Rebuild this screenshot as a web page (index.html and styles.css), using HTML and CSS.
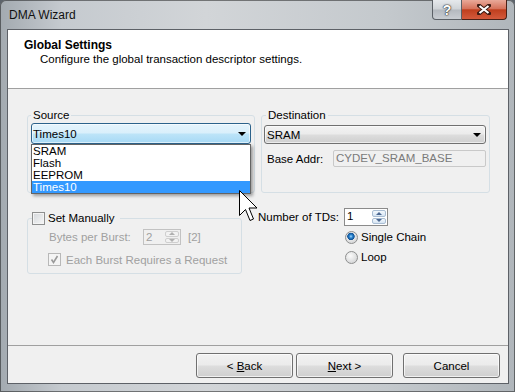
FILE: index.html
```html
<!DOCTYPE html>
<html lang="en">
<head>
    <meta charset="UTF-8">
    <title>DMA Wizard</title>
    <link rel="stylesheet" href="styles.css">
</head>
<body>
<div class="window">
    <div class="titlebar">
        <span class="title">DMA Wizard</span>
        <div class="caption-buttons">
            <span class="cap-btn help">?</span>
            <span class="cap-btn close">
                <svg width="14" height="11" viewBox="0 0 14 11">
                    <path d="M2 1.5 L12 9.5 M12 1.5 L2 9.5" stroke="#3b1a12" stroke-width="4" stroke-linecap="square"/>
                    <path d="M2.5 2 L11.5 9 M11.5 2 L2.5 9" stroke="#fff" stroke-width="2.2"/>
                </svg>
            </span>
        </div>
    </div>

    <div class="frame">
        <div class="client">
            <div class="header">
                <div class="header-title">Global Settings</div>
                <div class="header-sub">Configure the global transaction descriptor settings.</div>
            </div>

            <div class="content">
                <div class="row-top">
                    <fieldset class="group source">
                        <legend>Source</legend>
                        <div class="combo-wrap">
                            <div class="combo open"><span>Times10</span><span class="arrow"></span></div>
                            <ul class="dropdown">
                                <li>SRAM</li>
                                <li>Flash</li>
                                <li>EEPROM</li>
                                <li class="selected">Times10</li>
                            </ul>
                        </div>
                    </fieldset>

                    <fieldset class="group dest">
                        <legend>Destination</legend>
                        <div class="combo"><span>SRAM</span><span class="arrow"></span></div>
                        <div class="field-row">
                            <span class="base-label">Base Addr:</span>
                            <span class="textbox">CYDEV_SRAM_BASE</span>
                        </div>
                    </fieldset>
                </div>

                <div class="row-bottom">
                    <fieldset class="group manual">
                        <legend><span class="check"></span>Set Manually</legend>
                        <div class="burst-row">
                            <span class="burst-label">Bytes per Burst:</span>
                            <span class="spin off">
                                <span class="spin-text">2</span>
                                <span class="spin-btns"><span class="up"></span><span class="down"></span></span>
                            </span>
                            <span class="burst-note">[2]</span>
                        </div>
                        <div class="check-row">
                            <span class="check off">
                                <svg width="11" height="11" viewBox="0 0 11 11">
                                    <path d="M2.5 5.5 L4.5 8.5 L8.5 2" fill="none" stroke="#9a9a9a" stroke-width="1.6"/>
                                </svg>
                            </span>
                            <span class="check-text">Each Burst Requires a Request</span>
                        </div>
                    </fieldset>

                    <div class="tds">
                        <div class="tds-row">
                            <span class="tds-label">Number of TDs:</span>
                            <span class="spin">
                                <span class="spin-text">1</span>
                                <span class="spin-btns"><span class="up"></span><span class="down"></span></span>
                            </span>
                        </div>
                        <div class="radio-row first"><span class="radio on"></span>Single Chain</div>
                        <div class="radio-row"><span class="radio"></span>Loop</div>
                    </div>
                </div>

                <!-- mouse pointer over the open list -->
                <svg class="cursor" width="20" height="33" viewBox="0 0 20 33">
                    <polygon points="0.5,0.5 0.5,25.5 6.5,19.5 11,30.5 14.5,29 10,18 18,18" fill="#fff" stroke="#000" stroke-width="1"/>
                </svg>
            </div>

            <div class="footer">
                <button class="btn">&lt; <u>B</u>ack</button>
                <button class="btn next"><u>N</u>ext &gt;</button>
                <button class="btn cancel">Cancel</button>
            </div>
        </div>
    </div>
</div>
</body>
</html>
```

FILE: styles.css
```css
* {
    box-sizing: border-box;
}
body {
    margin: 0;
    background-color: #5c636b;
}
.window {
    width: 515px;
    height: 392px;
    display: flex;
    flex-direction: column;
    border-radius: 6px 6px 0 0;
    overflow: hidden;
    background: linear-gradient(90deg, #a3aab0 0%, #c5cacf 12%, #d2d5d8 40%, #c4c9cd 75%, #b0b6bb 100%);
    box-shadow: inset 0 0 0 1px rgba(0, 0, 0, 0.45);
    font-family: "Liberation Sans", Arial, sans-serif;
    font-size: 11.5px;
    color: #000;
}

/* title bar */
.titlebar {
    height: 29px;
    display: flex;
    justify-content: space-between;
    align-items: flex-start;
    padding: 0 8px 0 9px;
}
.title {
    font-size: 12px;
    line-height: 14px;
    margin-top: 8px;
    color: #111;
}
.caption-buttons {
    display: flex;
}
.cap-btn {
    height: 20px;
    display: flex;
    align-items: center;
    justify-content: center;
}
.help {
    width: 30px;
    border: 1px solid #5b6066;
    border-top: none;
    border-radius: 0 0 0 4px;
    background: linear-gradient(#e6e9ec, #cfd3d7 48%, #b4b9bf 52%, #c9cdd2);
    color: #fff;
    font-weight: bold;
    font-size: 14px;
    text-shadow: 0 0 1px #333, 0 0 1px #333, 0 0 2px #333;
}
.close {
    width: 45px;
    border: 1px solid #4a2016;
    border-top: none;
    border-left: none;
    border-radius: 0 0 4px 0;
    background: linear-gradient(#e9a999, #d6735c 45%, #bf3f1e 52%, #d45a3c);
}

/* client area */
.frame {
    flex: 1;
    display: flex;
    padding: 0 6px 8px 7px;
}
.client {
    flex: 1;
    display: flex;
    flex-direction: column;
    border: 1px solid #5d6167;
    background-color: #f0f0f0;
}
.header {
    height: 59px;
    background-color: #fff;
    border-bottom: 1px solid #a0a0a0;
    padding: 8px 0 0 16px;
}
.header-title {
    font-weight: bold;
    font-size: 12px;
    line-height: 14px;
}
.header-sub {
    line-height: 14px;
    padding-left: 16px;
}
.content {
    flex: 1;
    position: relative;
    padding: 19px 0 0 19px;
}

/* group boxes */
.row-top {
    display: flex;
    gap: 6px;
}
.group {
    margin: 0;
    padding: 0 0 0 3px;
    min-width: 0;
    height: 85px;
    border: 1px solid #d5dfe5;
    border-radius: 3px;
}
.group legend {
    padding: 0 2px;
    line-height: 14px;
}
.source {
    width: 228px;
}
.dest {
    width: 229px;
    padding-left: 2px;
}
.dest legend {
    margin-left: 2px;
}

/* combo boxes */
.combo-wrap {
    position: relative;
    margin-top: 1px;
    width: 220px;
}
.combo {
    height: 19px;
    margin-top: 3px;
    width: 222px;
    display: flex;
    align-items: center;
    justify-content: space-between;
    padding: 0 4px 0 2px;
    border: 1px solid #707070;
    border-radius: 3px;
    background: linear-gradient(#f3f3f3, #ebebeb 48%, #dddddd 52%, #cfcfcf);
    box-shadow: inset 0 0 0 1px rgba(255, 255, 255, 0.6);
}
.combo.open {
    height: 21px;
    margin-top: 0;
    width: 220px;
    padding-left: 1px;
    border-color: #2c628b;
    background: linear-gradient(#e5f4fc, #d9effb 48%, #bde4f8 52%, #a7d9f5);
}
.arrow {
    width: 0;
    height: 0;
    border-left: 4px solid transparent;
    border-right: 4px solid transparent;
    border-top: 4px solid #000;
}
.dropdown {
    position: absolute;
    top: 100%;
    left: 0;
    width: 220px;
    margin: 0;
    padding: 0;
    list-style: none;
    background-color: #fff;
    border: 1px solid #646464;
    box-shadow: 2px 2px 3px rgba(0, 0, 0, 0.35);
}
.dropdown li {
    height: 12px;
    line-height: 12px;
    padding-left: 1px;
}
.dropdown li.selected {
    background-color: #3399ff;
    color: #fff;
}

.field-row {
    display: flex;
    align-items: center;
    margin-top: 6px;
    padding-left: 3px;
}
.base-label {
    width: 66px;
}
.textbox {
    width: 153px;
    height: 17px;
    line-height: 15px;
    padding-left: 2px;
    border: 1px solid #c9c9c9;
    border-radius: 2px;
    color: #7a7a7a;
    background-color: #f0f0f0;
}

/* bottom area */
.row-bottom {
    display: flex;
    align-items: flex-start;
    margin-top: 15px;
}
.manual {
    width: 215px;
    height: 63px;
    margin-top: 3px;
    padding-left: 4px;
}
.manual legend {
    padding: 0 6px 0 0;
}
.check {
    display: inline-block;
    vertical-align: top;
    width: 13px;
    height: 13px;
    margin: 1px 3px 0 0;
    border: 1px solid #8e8f8f;
    background: linear-gradient(135deg, #d4d7db, #f7f7f7);
    box-shadow: inset 0 0 0 1px #f4f4f4;
}
.check.off {
    margin: 0;
    border-color: #b8b8b8;
    background: #f4f4f4;
    box-shadow: none;
}
.check svg {
    display: block;
}

.burst-row {
    display: flex;
    align-items: center;
    margin: 4px 0 0 17px;
    color: #a0a0a0;
}
.burst-label {
    width: 94px;
}
.burst-note {
    margin-left: 7px;
}
.check-row {
    display: flex;
    align-items: center;
    margin: 8px 0 0 16px;
    color: #a0a0a0;
}
.check-text {
    margin-left: 5px;
}

/* spin boxes */
.spin {
    display: flex;
    width: 44px;
    height: 18px;
    border: 1px solid #8b8b8b;
    background-color: #fff;
}
.spin-text {
    flex: 1;
    padding-left: 2px;
    line-height: 15px;
}
.spin-btns {
    width: 16px;
    display: flex;
    flex-direction: column;
    padding: 1px;
    gap: 1px;
}
.spin-btns span {
    flex: 1;
    display: flex;
    align-items: center;
    justify-content: center;
    border: 1px solid #a9bdd3;
    border-radius: 2px;
    background: linear-gradient(#f3f8fc, #d5e4f3);
}
.spin-btns .up::after {
    content: "";
    border-left: 3px solid transparent;
    border-right: 3px solid transparent;
    border-bottom: 3px solid #4a6791;
}
.spin-btns .down::after {
    content: "";
    border-left: 3px solid transparent;
    border-right: 3px solid transparent;
    border-top: 3px solid #4a6791;
}
.spin.off {
    width: 38px;
    height: 16px;
    border-color: #c2c2c2;
    background-color: #f0f0f0;
    color: #a0a0a0;
}
.spin.off .spin-text {
    line-height: 14px;
}
.spin.off .spin-btns span {
    border-color: #cfcfcf;
    background: #f2f2f2;
}
.spin.off .up::after {
    border-bottom-color: #b0b0b0;
}
.spin.off .down::after {
    border-top-color: #b0b0b0;
}

.tds {
    margin-left: 16px;
}
.tds-row {
    display: flex;
    align-items: center;
}
.tds-label {
    width: 86px;
}
.radio-row {
    display: flex;
    align-items: center;
    height: 20px;
    padding-left: 87px;
}
.radio-row.first {
    margin-top: 1px;
}
.radio {
    width: 13px;
    height: 13px;
    margin-right: 3px;
    border-radius: 50%;
    border: 1px solid #8e8f8f;
    background: radial-gradient(circle at 40% 35%, #fbfbfb, #d9dadb 70%, #cfd0d1);
}
.radio.on {
    background:
        radial-gradient(circle at 45% 40%, #a9dcff 0, #2c86d0 1.6px, #0e4f93 3.4px, rgba(14, 79, 147, 0) 4px),
        radial-gradient(circle at 40% 35%, #fbfbfb, #d9dadb 70%, #cfd0d1);
}

.cursor {
    position: absolute;
    left: 231px;
    top: 101px;
}

/* footer buttons */
.footer {
    height: 38px;
    border-top: 1px solid #a0a0a0;
    display: flex;
    justify-content: flex-end;
    align-items: flex-start;
    padding: 7px 8px 0 0;
}
.btn {
    width: 97px;
    height: 25px;
    margin: 0;
    padding: 0;
    font-family: inherit;
    font-size: 11.5px;
    color: #000;
    border: 1px solid #707070;
    border-radius: 3px;
    background: linear-gradient(#f2f2f2, #ebebeb 48%, #dddddd 52%, #cfcfcf);
    box-shadow: inset 0 0 0 1px rgba(255, 255, 255, 0.7);
}
.btn.next {
    margin-left: 3px;
}
.btn.cancel {
    margin-left: 10px;
}
```
